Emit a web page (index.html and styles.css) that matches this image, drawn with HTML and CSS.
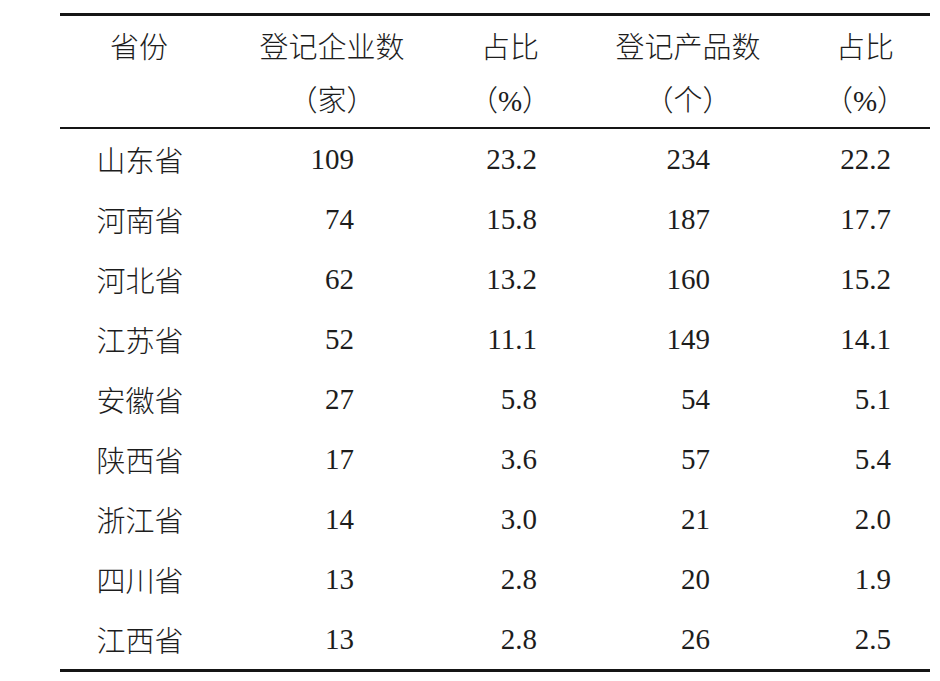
FILE: index.html
```html
<!DOCTYPE html>
<html lang="zh">
<head>
<meta charset="utf-8">
<title>登记企业数与产品数</title>
<link rel="stylesheet" href="styles.css">
</head>
<body>
<div class="page">
  <table class="data">
    <colgroup>
      <col class="c1"><col class="c2"><col class="c3"><col class="c4"><col class="c5">
    </colgroup>
    <thead>
      <tr>
        <th>省份</th>
        <th>登记企业数<br>（家）</th>
        <th>占比<br>（<span class="pct">%</span>）</th>
        <th>登记产品数<br>（个）</th>
        <th>占比<br>（<span class="pct">%</span>）</th>
      </tr>
    </thead>
    <tbody>
      <tr><td class="prov">山东省</td><td class="n wide">109</td><td class="n narrow">23.2</td><td class="n wide">234</td><td class="n narrow">22.2</td></tr>
      <tr><td class="prov">河南省</td><td class="n wide">74</td><td class="n narrow">15.8</td><td class="n wide">187</td><td class="n narrow">17.7</td></tr>
      <tr><td class="prov">河北省</td><td class="n wide">62</td><td class="n narrow">13.2</td><td class="n wide">160</td><td class="n narrow">15.2</td></tr>
      <tr><td class="prov">江苏省</td><td class="n wide">52</td><td class="n narrow">11.1</td><td class="n wide">149</td><td class="n narrow">14.1</td></tr>
      <tr><td class="prov">安徽省</td><td class="n wide">27</td><td class="n narrow">5.8</td><td class="n wide">54</td><td class="n narrow">5.1</td></tr>
      <tr><td class="prov">陕西省</td><td class="n wide">17</td><td class="n narrow">3.6</td><td class="n wide">57</td><td class="n narrow">5.4</td></tr>
      <tr><td class="prov">浙江省</td><td class="n wide">14</td><td class="n narrow">3.0</td><td class="n wide">21</td><td class="n narrow">2.0</td></tr>
      <tr><td class="prov">四川省</td><td class="n wide">13</td><td class="n narrow">2.8</td><td class="n wide">20</td><td class="n narrow">1.9</td></tr>
      <tr><td class="prov">江西省</td><td class="n wide">13</td><td class="n narrow">2.8</td><td class="n wide">26</td><td class="n narrow">2.5</td></tr>
    </tbody>
  </table>
</div>
</body>
</html>
```

FILE: styles.css
```css
html, body {
  margin: 0;
  padding: 0;
  background: #ffffff;
}

.page {
  padding: 13px 10px 0 60px;
}

.data {
  width: 870px;
  border-collapse: collapse;
  table-layout: fixed;
  font-family: "Noto Sans CJK SC", sans-serif;
  font-size: 29px;
  font-weight: 300;
  color: #1d1d1d;
  border-top: 3px solid #151515;
  border-bottom: 3px solid #151515;
}

.c1 { width: 160px; }
.c2 { width: 224px; }
.c3 { width: 132px; }
.c4 { width: 224px; }
.c5 { width: 130px; }

.data thead th {
  font-weight: 300;
  text-align: center;
  vertical-align: top;
  line-height: 53px;
  padding: 3px 0 2px 0;
  border-bottom: 2px solid #151515;
}

.data thead th:first-child {
  padding-right: 2px;
}

.data td {
  height: 60px;
  padding: 0;
  line-height: 60px;
  vertical-align: middle;
}

.data td.prov {
  text-align: center;
}

.data td.n {
  text-align: right;
  font-family: "Liberation Serif", "Times New Roman", serif;
  font-weight: 400;
}

.data td.wide {
  padding-right: 90px;
}

.data td.narrow {
  padding-right: 39px;
}

.pct {
  font-family: "Liberation Serif", "Times New Roman", serif;
  font-weight: 400;
  line-height: 1;
}
```
